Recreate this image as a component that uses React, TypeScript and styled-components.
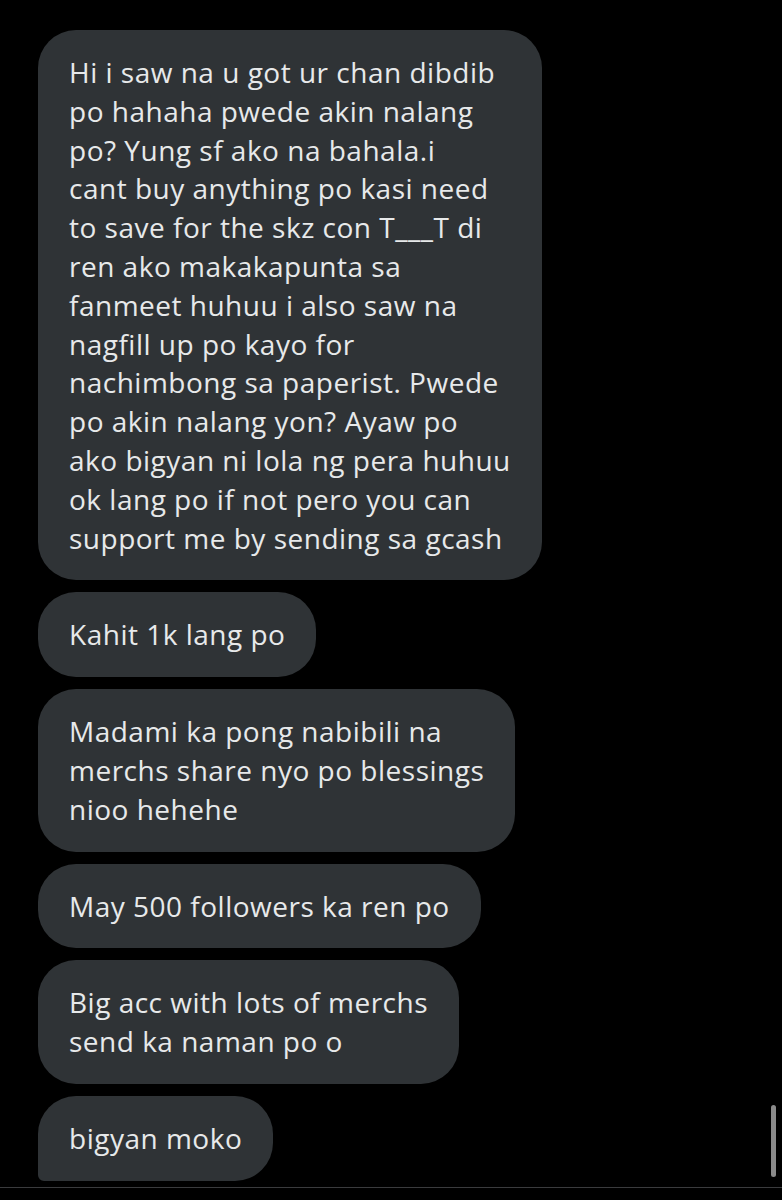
import React from "react";
import styled, { createGlobalStyle } from "styled-components";

const GlobalStyle = createGlobalStyle`
  html, body {
    margin: 0;
    padding: 0;
    background: #000;
  }
  body {
    font-family: "Open Sans", "Noto Sans", sans-serif;
  }
`;

const Screen = styled.div`
  position: relative;
  width: 782px;
  height: 1200px;
  background: #000;
  overflow: hidden;
`;

const Conversation = styled.div`
  height: 1157px;
  padding: 30px 0 0 38px;
  display: flex;
  flex-direction: column;
  align-items: flex-start;
  gap: 12px;
  overflow: hidden;
  border-bottom: 1px solid #3a3b3d;
`;

const Bubble = styled.div<{ $last?: boolean }>`
  box-sizing: border-box;
  padding: 23px 31px;
  background: #2f3336;
  color: #e7e9ea;
  font-size: 28px;
  line-height: 38.8px;
  letter-spacing: 0.5px;
  white-space: nowrap;
  border-radius: ${(p) => (p.$last ? "38px 38px 38px 6px" : "38px")};
  flex: none;
`;

const ScrollThumb = styled.div`
  position: absolute;
  left: 771px;
  top: 1105px;
  width: 5px;
  height: 72px;
  border-radius: 3px;
  background: #8a8a8a;
`;

const messages: string[][] = [
  [
    "Hi i saw na u got ur chan dibdib",
    "po hahaha pwede akin nalang",
    "po? Yung sf ako na bahala.i",
    "cant buy anything po kasi need",
    "to save for the skz con T___T di",
    "ren ako makakapunta sa",
    "fanmeet huhuu i also saw na",
    "nagfill up po kayo for",
    "nachimbong sa paperist. Pwede",
    "po akin nalang yon? Ayaw po",
    "ako bigyan ni lola ng pera huhuu",
    "ok lang po if not pero you can",
    "support me by sending sa gcash",
  ],
  ["Kahit 1k lang po"],
  ["Madami ka pong nabibili na", "merchs share nyo po blessings", "nioo hehehe"],
  ["May 500 followers ka ren po"],
  ["Big acc with lots of merchs", "send ka naman po o"],
  ["bigyan moko"],
];

function App() {
  return (
    <>
      <GlobalStyle />
      <Screen>
        <Conversation>
          {messages.map((lines, i) => (
            <Bubble key={i} $last={i === messages.length - 1}>
              {lines.map((line, j) => (
                <React.Fragment key={j}>
                  {j > 0 && <br />}
                  {line}
                </React.Fragment>
              ))}
            </Bubble>
          ))}
        </Conversation>
        <ScrollThumb />
      </Screen>
    </>
  );
}

export default App;
